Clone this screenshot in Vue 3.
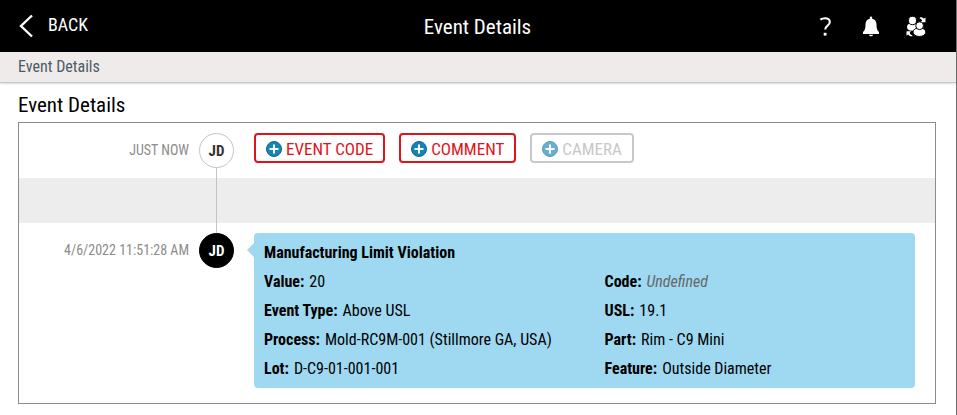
<script setup>
const actions = [
  { label: 'EVENT CODE', disabled: false },
  { label: 'COMMENT', disabled: false },
  { label: 'CAMERA', disabled: true }
]

const fields = [
  { label: 'Value:', value: '20' },
  { label: 'Code:', value: 'Undefined', empty: true },
  { label: 'Event Type:', value: 'Above USL' },
  { label: 'USL:', value: '19.1' },
  { label: 'Process:', value: 'Mold-RC9M-001 (Stillmore GA, USA)' },
  { label: 'Part:', value: 'Rim - C9 Mini' },
  { label: 'Lot:', value: 'D-C9-01-001-001' },
  { label: 'Feature:', value: 'Outside Diameter' }
]
</script>

<template>
  <div class="app">
    <header class="topbar">
      <a class="back" href="#">
        <svg width="14" height="24" viewBox="0 0 14 24" fill="none" stroke="#fff" stroke-width="2.4">
          <path d="M13 1.5 2 12l11 10.500" />
        </svg>
        <span>BACK</span>
      </a>
      <div class="topbar-title">Event Details</div>
      <nav class="tools">
        <button class="tool" type="button" aria-label="Help">
          <svg width="20" height="22" viewBox="0 0 20 22">
            <path d="M4.300 4.700C5.700 3.700 7.200 3.200 9 3.200c3.100 0 4.800 1.400 4.800 3.800 0 3.900-4.600 3.600-4.600 7.500" fill="none" stroke="#fff" stroke-width="2.100" />
            <rect x="7.700" y="17.800" width="2.800" height="2.800" fill="#fff" />
          </svg>
        </button>
        <button class="tool" type="button" aria-label="Notifications">
          <svg width="20" height="22" viewBox="0 0 20 22" fill="#fff">
            <path d="M8.800 3.200V2.800a1.200 1.200 0 0 1 2.400 0v.9C14.200 4.400 15.500 6.500 15.500 9.300c0 4.200.7 6.300 2.500 7.600V19H2v-2.100C3.800 15.600 4.500 13.500 4.500 9.300c0-2.800 1.300-4.900 4.300-5.600z" />
            <path d="M8 19.800h4c-.2 1-1 1.500-2 1.500S8.200 20.800 8 19.800z" />
          </svg>
        </button>
        <button class="tool" type="button" aria-label="Switch user">
          <svg width="20" height="22" viewBox="0 0 20 22" fill="#fff">
            <path d="M1 12c0-2.200 1.600-3.700 5-3.700s5 1.500 5 3.700-1.600 3.800-5 3.800-5-1.600-5-3.800z" />
            <ellipse cx="6.500" cy="5.500" rx="4" ry="4.200" stroke="#000" stroke-width="1" />
            <ellipse cx="13.400" cy="17.100" rx="6.400" ry="4.400" stroke="#000" stroke-width="1" />
            <circle cx="13.600" cy="10.700" r="3.900" stroke="#000" stroke-width="1" />
            <path d="M13.800 2.200c1.900 0 3.200.4 4 1.600l1.700-1.300v4.800h-4.900l1.500-1.500c-.4-1.300-1.100-2-2.300-2.300z" />
            <path d="M.5 16.300h4.600l-1.400 1.400c.5 1.400 1.300 2.200 2.600 2.600v1c-2 0-3.300-.6-4.200-1.900L.5 20.800z" />
          </svg>
        </button>
      </nav>
    </header>

    <nav class="breadcrumb"><a href="#">Event Details</a></nav>

    <main class="content">
      <h1>Event Details</h1>
      <section class="timeline">
        <div class="row">
          <div class="when">JUST NOW</div>
          <div class="marker"><span class="avatar">JD</span></div>
          <div class="actions">
            <button v-for="a in actions" :key="a.label" class="action" type="button" :disabled="a.disabled">
              <svg width="16" height="16" viewBox="0 0 16 16">
                <circle cx="8" cy="8" r="7.500" fill="#1585b8" stroke="#0d6690" />
                <path d="M8 3.500v9M3.500 8h9" stroke="#fff" stroke-width="2" />
              </svg>
              <span>{{ a.label }}</span>
            </button>
          </div>
        </div>
        <div class="row spacer">
          <div></div>
          <div class="marker"></div>
        </div>
        <div class="row">
          <time class="when">4/6/2022 11:51:28 AM</time>
          <div class="marker last"><span class="avatar dark">JD</span></div>
          <article class="card">
            <h2>Manufacturing Limit Violation</h2>
            <dl>
              <div v-for="f in fields" :key="f.label" class="field">
                <dt>{{ f.label }}</dt>
                <dd :class="{ empty: f.empty }">{{ f.value }}</dd>
              </div>
            </dl>
          </article>
        </div>
      </section>
    </main>
  </div>
</template>

<style>
body {
  background: #fff;
}
</style>

<style scoped>
* {
  box-sizing: border-box;
}
.app {
  min-height: 100vh;
  border-right: 1px solid #6e6e6e;
  font-family: "Roboto Condensed", "Liberation Sans Narrow", Roboto, sans-serif;
  font-size: 16px;
  color: #000;
}
.topbar {
  display: grid;
  grid-template-columns: 1fr auto 1fr;
  align-items: center;
  height: 52px;
  padding: 0 20px 0 19px;
  background: #000;
  color: #fff;
}
.back {
  display: flex;
  align-items: center;
  gap: 15px;
  color: #fff;
  font-size: 18px;
  line-height: 24px;
  text-decoration: none;
}
.back span {
  padding-bottom: 2px;
}
.topbar-title {
  padding-top: 1px;
  font-size: 21px;
  line-height: 26px;
}
.tools {
  display: flex;
  justify-content: flex-end;
  gap: 25px;
  padding-right: 10px;
}
.tool {
  display: flex;
  padding: 0;
  border: 0;
  background: none;
}
.breadcrumb {
  padding: 4px 18px;
  border-bottom: 1px solid #c8c6c6;
  background: #efebea;
  box-shadow: 0 1px 2px rgba(0, 0, 0, 0.15);
  line-height: 22px;
}
.breadcrumb a {
  color: #4c5a66;
  text-decoration: none;
}
.content {
  padding: 10px 20px 11px 18px;
}
h1 {
  margin: 0 0 4px;
  font-size: 21px;
  font-weight: 400;
  line-height: 25px;
}
.timeline {
  border: 1px solid #8c8c8c;
}
.row {
  display: grid;
  grid-template-columns: 170px 35px 1fr;
  padding-right: 20px;
}
.spacer {
  height: 45px;
  background: #ededed;
}
.when {
  padding-top: 10px;
  color: #8c8c8c;
  font-size: 14px;
  line-height: 35px;
  text-align: right;
}
.marker {
  display: flex;
  flex-direction: column;
  align-items: center;
  margin-left: 10px;
  width: 35px;
}
.marker::after {
  content: "";
  flex: 1;
  width: 1px;
  background: #c4c4c4;
}
.marker::before {
  content: "";
  width: 1px;
  height: 10px;
}
.marker.last::before {
  background: #c4c4c4;
}
.marker.last::after {
  display: none;
}
.spacer .marker::before {
  display: none;
}
.avatar {
  width: 35px;
  height: 35px;
  border: 1px solid #c4c4c4;
  border-radius: 50%;
  color: #333;
  font-size: 15px;
  font-weight: 700;
  line-height: 34px;
  text-align: center;
}
.avatar.dark {
  border-color: #000;
  background: #000;
  color: #fff;
}
.actions {
  display: flex;
  gap: 14px;
  padding: 10px 0 15px 30px;
}
.action {
  display: flex;
  align-items: center;
  gap: 4px;
  height: 30px;
  padding: 2px 10px 0;
  border: 2px solid #de141b;
  border-radius: 4px;
  background: #fff;
  color: #de141b;
  font-family: inherit;
  font-size: 17px;
}
.action:disabled {
  border-color: #c8c8c8;
  color: #c8c8c8;
}
.action:disabled svg {
  opacity: 0.65;
}
.card {
  position: relative;
  margin: 10px 0 15px 30px;
  padding: 5px 10px;
  border-radius: 4px;
  background: #9ed9f1;
  line-height: 29px;
}
.card::before {
  content: "";
  position: absolute;
  top: 10px;
  left: -7px;
  border: 7px solid transparent;
  border-left-width: 0;
  border-right-color: #9ed9f1;
}
h2 {
  margin: 0;
  font-size: 16px;
  font-weight: 700;
}
dl {
  display: grid;
  grid-template-columns: 17fr 15fr;
  margin: 0;
}
.field {
  display: flex;
  gap: 5px;
}
dt {
  font-weight: 700;
}
dd {
  margin: 0;
}
.empty {
  color: #666;
  font-style: italic;
}
</style>
